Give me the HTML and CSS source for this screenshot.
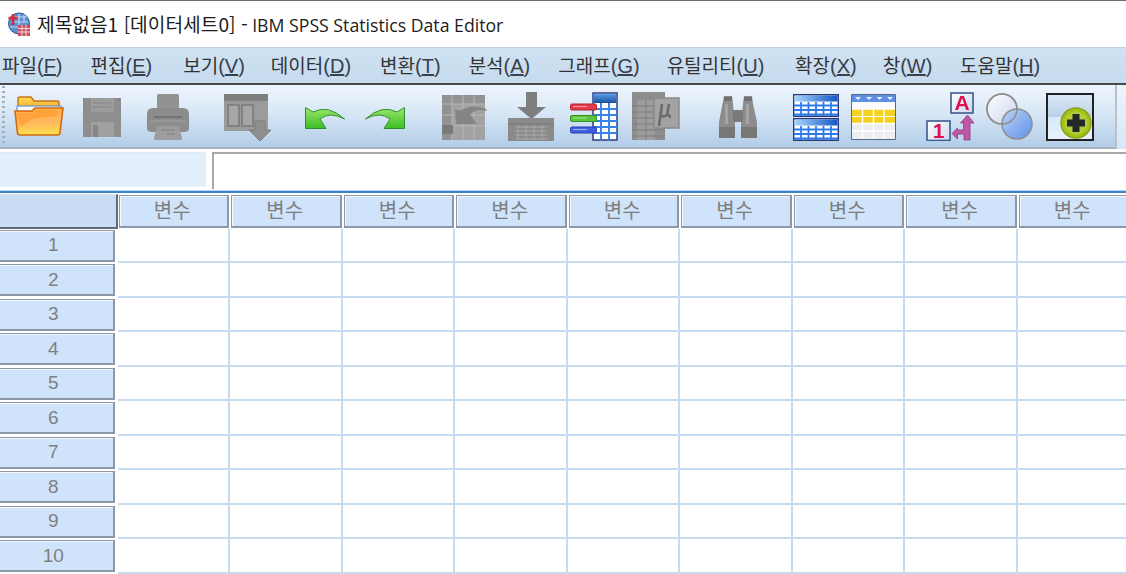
FILE: index.html
```html
<!DOCTYPE html>
<html lang="ko">
<head>
<meta charset="utf-8">
<title>제목없음1 [데이터세트0] - IBM SPSS Statistics Data Editor</title>
<link rel="stylesheet" href="styles.css">
</head>
<body>
<div class="app">
  <header class="titlebar">
    <svg class="appicon" width="26" height="26" viewBox="0 0 26 26">
      <circle cx="13" cy="12.5" r="10.5" fill="#5b8fd0" stroke="#2c5a94"/>
      <path d="M7 6h14M5 11h17M4 16h8M13 3v17M18 4v7" stroke="#c4d9f0" stroke-width="1.2" fill="none"/>
      <path d="M7 3v11M2.500 7h9" stroke="#d8283a" stroke-width="2.600"/>
      <rect x="12" y="14" width="12" height="11" fill="#c8505e"/>
      <path d="M12 17.500h12M12 21h12M16 14v11M20 14v11" stroke="#f4d8dc" stroke-width="1"/>
    </svg>
    <span class="title"><span class="title-ko">제목없음1 [데이터세트0] -</span> IBM SPSS Statistics Data Editor</span>
  </header>
  <nav class="menubar">
    <span class="menu m1">파일<span class="k">(<u>F</u>)</span></span>
    <span class="menu m2">편집<span class="k">(<u>E</u>)</span></span>
    <span class="menu m3">보기<span class="k">(<u>V</u>)</span></span>
    <span class="menu m4">데이터<span class="k">(<u>D</u>)</span></span>
    <span class="menu m5">변환<span class="k">(<u>T</u>)</span></span>
    <span class="menu m6">분석<span class="k">(<u>A</u>)</span></span>
    <span class="menu m7">그래프<span class="k">(<u>G</u>)</span></span>
    <span class="menu m8">유틸리티<span class="k">(<u>U</u>)</span></span>
    <span class="menu m9">확장<span class="k">(<u>X</u>)</span></span>
    <span class="menu m10">창<span class="k">(<u>W</u>)</span></span>
    <span class="menu m11">도움말<span class="k">(<u>H</u>)</span></span>
  </nav>
  <div class="toolbarrow">
    <div class="toolbar">
      <div class="grip"></div>
      <!-- open -->
      <svg class="ic i-open" width="50" height="42" viewBox="0 0 50 42">
        <defs>
          <linearGradient id="fo" x1="0" y1="0" x2="0" y2="1"><stop offset="0" stop-color="#ffb14a"/><stop offset=".55" stop-color="#ffb860"/><stop offset="1" stop-color="#ffe24a"/></linearGradient>
          <linearGradient id="fb" x1="0" y1="0" x2="0" y2="1"><stop offset="0" stop-color="#ffdc55"/><stop offset="1" stop-color="#f0a020"/></linearGradient>
        </defs>
        <path d="M4 14V4q0-2 2-2h11l3 4h23q2 0 2 2v8z" fill="url(#fb)" stroke="#c9741a" stroke-width="1.500"/>
        <path d="M3 11h44v8H3z" fill="#f6f8fb" stroke="#4f86d8"/>
        <path d="M1 16h17l3-3h28l-3 25q-.2 2-3 2H6q-2 0-2.500-2z" fill="url(#fo)" stroke="#cf6a10" stroke-width="1.600"/>
        <path d="M6 32q14-13 37-10l1-7H22l-3 3H3z" fill="#ff9a2c" opacity=".65"/>
      </svg>
      <!-- save -->
      <svg class="ic i-save" width="40" height="40" viewBox="0 0 40 40">
        <path d="M1 1h38v39H1z" fill="#8e8e8e"/>
        <path d="M9 1h23v14H9z" fill="#9c9c9c"/>
        <path d="M11 6h18M11 10h18" stroke="#858585"/>
        <path d="M9 25h23v15H9z" fill="#a0a0a0"/>
        <path d="M11 28h5v12h-5z" fill="#868686"/>
        <path d="M2 2v2M37 2v2" stroke="#707070"/>
      </svg>
      <!-- print -->
      <svg class="ic i-print" width="42" height="46" viewBox="0 0 42 46">
        <path d="M10 2q0-2 2-2h18q2 0 2 2v13H10z" fill="#929292"/>
        <path d="M6 14h30q6 0 6 6v14q0 4-5 4H5q-5 0-5-4V20q0-6 6-6z" fill="#8c8c8c"/>
        <path d="M7 22h28v2H7z" fill="#737373"/>
        <path d="M3 27h36" stroke="#a2a2a2"/>
        <path d="M10 32h22l3 12q0 2-3 2H10q-3 0-3-2z" fill="#9d9d9d"/>
        <path d="M14 36h14M20 40h8" stroke="#808080"/>
      </svg>
      <!-- dialog recall -->
      <svg class="ic i-dialog" width="48" height="47" viewBox="0 0 48 47">
        <path d="M1 0h44v37H1z" fill="#9b9b9b"/>
        <path d="M1 0h44v7H1z" fill="#7f7f7f"/>
        <path d="M5 11h11v21H5zM19 11h11v21H19z" fill="#a6a6a6" stroke="#7a7a7a" stroke-width="1.500"/>
        <path d="M32 27h10v9h6L37 47 26 36h6z" fill="#8f8f8f" stroke="#7d7d7d"/>
      </svg>
      <!-- undo -->
      <svg class="ic i-undo" width="41" height="23" viewBox="0 0 41 23">
        <defs><linearGradient id="ar" x1="0" y1="0" x2="0" y2="1"><stop offset="0" stop-color="#9ce86a"/><stop offset="1" stop-color="#3cbc28"/></linearGradient></defs>
        <path d="M.5.5L8 5q15-8 31.500 7Q25 4 15 12l6 9.500H.5z" fill="url(#ar)" stroke="#2f8f2b"/>
      </svg>
      <!-- redo -->
      <svg class="ic i-redo" width="41" height="23" viewBox="0 0 41 23">
        <path d="M40.500.5L33 5Q18-3 1.500 12 16 4 26 12l-6 9.500h20.500z" fill="url(#ar)" stroke="#2f8f2b"/>
      </svg>
      <!-- goto case -->
      <svg class="ic i-goto" width="45" height="46" viewBox="0 0 45 46">
        <path d="M0 1h43v45H0z" fill="#a2a2a2"/>
        <path d="M0 1h43v9H0zM0 1h10v45H0z" fill="#929292"/>
        <path d="M0 10h43M0 21h43M0 32h43M10 1v45M21 1v45M32 1v45" stroke="#b6b6b6"/>
        <path d="M0 31h11v9H0z" fill="#7a7a7a"/>
        <path d="M13 15l5 2q12-8 26-2l1 2q-10-3-17 3l7 10H14z" fill="#858585"/>
      </svg>
      <!-- goto variable -->
      <svg class="ic i-var" width="46" height="49" viewBox="0 0 46 49">
        <path d="M18 0h11v15h9L23.500 27 9 15h9z" fill="#7e7e7e"/>
        <path d="M0 26h46v23H0z" fill="#8a8a8a"/>
        <path d="M0 32h46" stroke="#777"/>
        <path d="M7 35h32M7 39h32M7 43h32M7 47h32M10 33v14M18 33v14M26 33v14M34 33v14" stroke="#a8a8a8"/>
      </svg>
      <!-- variables -->
      <svg class="ic i-vars" width="48" height="49" viewBox="0 0 48 49">
        <defs><linearGradient id="bh" x1="0" y1="0" x2="0" y2="1"><stop offset="0" stop-color="#5c9ee8"/><stop offset="1" stop-color="#14509c"/></linearGradient></defs>
        <path d="M23 1h24v47H23z" fill="#fff" stroke="#2a3c80" stroke-width="1.500"/>
        <path d="M24 2h22v9H24z" fill="url(#bh)"/>
        <path d="M24 17h23M24 23h23M24 29h23M24 35h23M24 41h23" stroke="#3a84e8" stroke-width="2"/>
        <path d="M31 11v37M39 11v37" stroke="#3a84e8" stroke-width="2"/>
        <rect x=".5" y="12" width="26" height="6" rx="1.500" fill="#e83a48" stroke="#b02030"/>
        <rect x=".5" y="23.500" width="26" height="6" rx="1.500" fill="#5cc43c" stroke="#389024"/>
        <rect x=".5" y="35" width="26" height="6" rx="1.500" fill="#4060e0" stroke="#2a3cb0"/>
        <path d="M3 14.500h14M3 26h14M3 37.500h14" stroke="#fff" stroke-opacity=".5"/>
      </svg>
      <!-- mu -->
      <svg class="ic i-mu" width="49" height="49" viewBox="0 0 49 49">
        <path d="M1 0h33v48H1z" fill="#8d8d8d"/>
        <path d="M6 8h8v40H6zM16 8h8v40h-8z" fill="#9c9c9c"/>
        <path d="M1 14h33M1 20h33M1 26h33M1 32h33M1 38h33M1 44h33" stroke="#7c7c7c"/>
        <path d="M23 6h25v30H23z" fill="#a3a3a3" stroke="#8a8a8a" stroke-width="1.500"/>
        <path d="M31 12l-3 22M31 23q1 3 5 0l2-11M38 22q0 3 2 3" stroke="#6a6a6a" stroke-width="2.500" fill="none"/>
      </svg>
      <!-- binoculars -->
      <svg class="ic i-find" width="38" height="42" viewBox="0 0 38 42">
        <path d="M5 0h8l1 8 2 20v14H0V26z" fill="#8c8c8c"/>
        <path d="M25 0h8l1 8 4 18v16H22V28l2-20z" fill="#8c8c8c"/>
        <path d="M14 14h10v12H14z" fill="#7a7a7a"/>
        <path d="M0 31h16v11H0zM22 31h16v11H22z" fill="#777"/>
        <path d="M5 1h8v4H5zM25 1h8v4h-8z" fill="#707070"/>
        <path d="M6 8h3v20H6zM27 8h3v20h-3z" fill="#a4a4a4"/>
      </svg>
      <!-- split -->
      <svg class="ic i-split" width="46" height="47" viewBox="0 0 46 47">
        <defs><linearGradient id="tb" x1="0" y1="0" x2="1" y2="0"><stop offset="0" stop-color="#a8d4fb"/><stop offset="1" stop-color="#1358c4"/></linearGradient></defs>
        <path d="M.7.7h44.600v21.600H.7z" fill="#fff" stroke="#2a3a78" stroke-width="1.400"/>
        <path d="M1.500 1.500h43v6h-43z" fill="url(#tb)"/>
        <path d="M1 11.500h44M1 16h44M1 20.500h44" stroke="#2d7be8" stroke-width="1.800"/>
        <path d="M8 8v14M15.500 8v14M23 8v14M30.500 8v14M38 8v14" stroke="#2d7be8" stroke-width="1.800"/>
        <path d="M.7 24.700h44.600v21.600H.7z" fill="#fff" stroke="#2a3a78" stroke-width="1.400"/>
        <path d="M1.500 25.500h43v6h-43z" fill="url(#tb)"/>
        <path d="M1 35.500h44M1 40h44M1 44.500h44" stroke="#2d7be8" stroke-width="1.800"/>
        <path d="M8 32v14M15.500 32v14M23 32v14M30.500 32v14M38 32v14" stroke="#2d7be8" stroke-width="1.800"/>
      </svg>
      <!-- select -->
      <svg class="ic i-select" width="45" height="46" viewBox="0 0 45 46">
        <path d="M.500.500h44v45H.500z" fill="#eef0f4" stroke="#56688c"/>
        <path d="M1 1h43v7H1z" fill="#5f8fe0"/>
        <path d="M4 3h6l-3 3zM15 3h6l-3 3zM25.500 3h6l-3 3zM36 3h6l-3 3z" fill="#e8f0ff"/>
        <path d="M1 8h43v7H1z" fill="#fbfbfd"/>
        <path d="M1 15h43v14.500H1z" fill="#f4d020"/>
        <path d="M1 22.500h43" stroke="#fff"/>
        <path d="M1 29.500h43v15H1z" fill="#eceef2"/>
        <path d="M1 15h43M1 29.500h43M1 37h43M11.500 8v37M22.500 8v37M33 8v37" stroke="#fff" stroke-width="1.400"/>
      </svg>
      <!-- value labels -->
      <svg class="ic i-labels" width="48" height="49" viewBox="0 0 48 49">
        <defs><linearGradient id="lb" x1="0" y1="0" x2="1" y2="1"><stop offset="0" stop-color="#fff"/><stop offset="1" stop-color="#c8d8ee"/></linearGradient></defs>
        <rect x="25" y="1" width="22" height="20" fill="url(#lb)" stroke="#3e5c8e" stroke-width="1.600"/>
        <rect x="1" y="29" width="23" height="19.500" fill="url(#lb)" stroke="#3e5c8e" stroke-width="1.600"/>
        <text class="lt" x="36" y="18">A</text>
        <text class="lt" x="12.500" y="46">1</text>
        <path d="M41.500 23l6.500 8h-4v17h-6v-6h-6.500v5L26 41.500 31.500 36v2h6v-7h-3z" fill="#c058a8" stroke="#8e3a80" stroke-width=".8"/>
      </svg>
      <!-- circles -->
      <svg class="ic i-sets" width="48" height="47" viewBox="0 0 48 47">
        <defs>
          <linearGradient id="c1" x1="0" y1="0" x2="1" y2="1"><stop offset="0" stop-color="#fff"/><stop offset="1" stop-color="#c8d4ec"/></linearGradient>
          <linearGradient id="c2" x1="0" y1="0" x2="1" y2="1"><stop offset="0" stop-color="#bcd4f6"/><stop offset="1" stop-color="#5f90e8"/></linearGradient>
        </defs>
        <circle cx="16" cy="16" r="15" fill="url(#c1)" stroke="#8f8f8f" stroke-width="1.500"/>
        <circle cx="31" cy="31" r="15" fill="url(#c2)" stroke="#8f8f8f" stroke-width="1.500"/>
        <circle cx="16" cy="16" r="15" fill="none" stroke="#8f8f8f" stroke-width="1.500"/>
      </svg>
      <!-- custom -->
      <button class="toolbtn" type="button">
        <svg class="plus" width="32" height="32" viewBox="0 0 32 32">
          <circle cx="16" cy="16" r="15" fill="#a3c218" stroke="#8aa218" stroke-width="1.500"/>
          <circle cx="16" cy="16" r="11.500" fill="#b3cc3a"/>
          <path d="M12.500 7h7v5.500H25v7h-5.500V25h-7v-5.500H7v-7h5.500z" fill="#23282a"/>
        </svg>
      </button>
    </div>
    <div class="toolrest"></div>
  </div>
  <div class="formula">
    <div class="cellname"></div>
    <div class="cellinput"></div>
  </div>
  <div class="sheet">
    <div class="corner"></div>
    <div class="colhead">변수</div><div class="colhead">변수</div><div class="colhead">변수</div><div class="colhead">변수</div><div class="colhead">변수</div><div class="colhead">변수</div><div class="colhead">변수</div><div class="colhead">변수</div><div class="colhead">변수</div>
    <div class="rowhead">1</div><div class="cell"></div><div class="cell"></div><div class="cell"></div><div class="cell"></div><div class="cell"></div><div class="cell"></div><div class="cell"></div><div class="cell"></div><div class="cell"></div>
    <div class="rowhead">2</div><div class="cell"></div><div class="cell"></div><div class="cell"></div><div class="cell"></div><div class="cell"></div><div class="cell"></div><div class="cell"></div><div class="cell"></div><div class="cell"></div>
    <div class="rowhead">3</div><div class="cell"></div><div class="cell"></div><div class="cell"></div><div class="cell"></div><div class="cell"></div><div class="cell"></div><div class="cell"></div><div class="cell"></div><div class="cell"></div>
    <div class="rowhead">4</div><div class="cell"></div><div class="cell"></div><div class="cell"></div><div class="cell"></div><div class="cell"></div><div class="cell"></div><div class="cell"></div><div class="cell"></div><div class="cell"></div>
    <div class="rowhead">5</div><div class="cell"></div><div class="cell"></div><div class="cell"></div><div class="cell"></div><div class="cell"></div><div class="cell"></div><div class="cell"></div><div class="cell"></div><div class="cell"></div>
    <div class="rowhead">6</div><div class="cell"></div><div class="cell"></div><div class="cell"></div><div class="cell"></div><div class="cell"></div><div class="cell"></div><div class="cell"></div><div class="cell"></div><div class="cell"></div>
    <div class="rowhead">7</div><div class="cell"></div><div class="cell"></div><div class="cell"></div><div class="cell"></div><div class="cell"></div><div class="cell"></div><div class="cell"></div><div class="cell"></div><div class="cell"></div>
    <div class="rowhead">8</div><div class="cell"></div><div class="cell"></div><div class="cell"></div><div class="cell"></div><div class="cell"></div><div class="cell"></div><div class="cell"></div><div class="cell"></div><div class="cell"></div>
    <div class="rowhead">9</div><div class="cell"></div><div class="cell"></div><div class="cell"></div><div class="cell"></div><div class="cell"></div><div class="cell"></div><div class="cell"></div><div class="cell"></div><div class="cell"></div>
    <div class="rowhead">10</div><div class="cell"></div><div class="cell"></div><div class="cell"></div><div class="cell"></div><div class="cell"></div><div class="cell"></div><div class="cell"></div><div class="cell"></div><div class="cell"></div>
  </div>
</div>
</body>
</html>
```
FILE: styles.css
```css
* { box-sizing: border-box; }
html, body { margin: 0; height: 100%; overflow: hidden; background: #fff; }
.app { width: 1126px; height: 574px; overflow: hidden; font-family: "Open Sans", "Noto Sans CJK KR", sans-serif; display: flex; flex-direction: column; }

.titlebar { height: 47px; flex: none; border-top: 1px solid #6e6e6e; display: flex; align-items: center; padding-left: 6px; gap: 5px; background: #fff; }
.appicon { flex: none; margin-top: -1px; }
.title { font-size: 17.700px; color: #1c1c1c; white-space: nowrap; line-height: 26px; }
.title-ko { font-size: 19.200px; font-family: "Noto Sans CJK KR", sans-serif; }

.menubar { height: 38px; flex: none; display: flex; align-items: center; background: linear-gradient(#cfe2f3, #c6dbee); border-top: 1px solid #c2d0de; border-bottom: 2px solid #44494f; padding: 0 0 1px 2px; font-size: 19px; color: #333; white-space: nowrap; }
.menu { flex: none; font-family: "Noto Sans CJK KR", sans-serif; line-height: 26px; }
.k { font-family: "Liberation Sans", sans-serif; color: #39404c; font-size: 20px; }
.m2 { margin-left: 28px; } .m3 { margin-left: 31px; } .m4 { margin-left: 26px; } .m5 { margin-left: 29px; } .m6 { margin-left: 28px; }
.m7 { margin-left: 28px; } .m8 { margin-left: 27px; } .m9 { margin-left: 30.700px; } .m10 { margin-left: 26px; } .m11 { margin-left: 27.500px; }

.toolbarrow { height: 64px; flex: none; display: flex; background: #fff; }
.toolbar { width: 1117px; flex: none; height: 64px; display: flex; align-items: flex-start; padding-left: 2px; background: linear-gradient(#eef5fd, #d8e7f6 45%, #b2cde8); border-bottom: 2px solid #a8b0ba; border-right: 2px solid #b8c0c8; }
.toolrest { flex: 1; height: 64px; background: linear-gradient(#eef5fc, #d6e5f5); }
.grip { width: 3px; height: 60px; margin-top: 1px; flex: none; background: repeating-linear-gradient(#a4aeb8 0 2px, transparent 2px 5px); }
.ic { flex: none; display: block; filter: blur(0.35px); }
.i-open { margin: 10px 0 0 9px; }
.i-save { margin: 12px 0 0 18px; }
.i-print { margin: 9px 0 0 25px; }
.i-dialog { margin: 9px 0 0 34px; }
.i-undo { margin: 22px 0 0 34px; }
.i-redo { margin: 22px 0 0 18px; }
.i-goto { margin: 9px 0 0 37px; }
.i-var { margin: 7px 0 0 21px; }
.i-vars { margin: 7px 0 0 16px; }
.i-mu { margin: 7px 0 0 13px; }
.i-find { margin: 11px 0 0 39px; }
.i-split { margin: 9px 0 0 36px; }
.i-select { margin: 9px 0 0 12px; }
.i-labels { margin: 7px 0 0 30px; }
.i-sets { margin: 8px 0 0 12px; }
.toolbtn { flex: none; width: 48px; height: 48px; margin: 8px 0 0 12px; padding: 0; border: 2px solid #222; background: linear-gradient(#dce9f6 0, #b9d1ea 50%, #d9e8f8 50%, #e6f0fb 100%); display: flex; align-items: flex-end; justify-content: flex-end; }
.lt { font-family: "Liberation Sans", sans-serif; font-weight: 700; font-size: 21px; fill: #e0104f; text-anchor: middle; }

.formula { height: 42px; flex: none; display: flex; padding-top: 3px; background: #fff; gap: 6px; }
.cellname { width: 206px; height: 35px; background: #e3effb; border-top: 1px solid #dfe9f3; }
.cellinput { flex: 1; height: 37px; background: #fff; border-top: 2px solid #a8a8a8; border-left: 2px solid #a8a8a8; }

.sheet { flex: none; display: grid; grid-template-columns: 117.500px repeat(9, 112.500px); grid-template-rows: 34.500px repeat(10, 34.500px); border-top: 2px solid #3a85cc; box-shadow: 0 -1px 0 #b4d4f2; padding-top: 1px; background: #fff; }
.corner { background: #c9def5; border-right: 2px solid #5f6a76; border-bottom: 2px solid #5f6a76; border-top: 1px solid #d6e6f7; }
.colhead { margin: 1px; background: #cfe3fa; border-style: solid; border-width: 1px 2px 2px 1px; border-color: #8c98a8; box-shadow: inset 1px 1px 0 #f4f8fd; display: flex; align-items: center; justify-content: center; font-family: "Noto Sans CJK KR", sans-serif; font-size: 20px; color: #7d7d7d; padding: 0 2px 2px 0; }
.rowhead { height: 32px; margin: 1px 3px 0 0; background: #cfe3fa; border-style: solid; border-width: 1px 2px 2px 0; border-color: #8c98a8; box-shadow: inset 0 1px 0 #f4f8fd; display: flex; align-items: center; justify-content: center; font-family: "Liberation Sans", sans-serif; font-size: 19px; color: #808080; padding-right: 6px; }
.cell { border-right: 2px solid #c6daf0; border-bottom: 2px solid #c6daf0; background: #fff; }
```
